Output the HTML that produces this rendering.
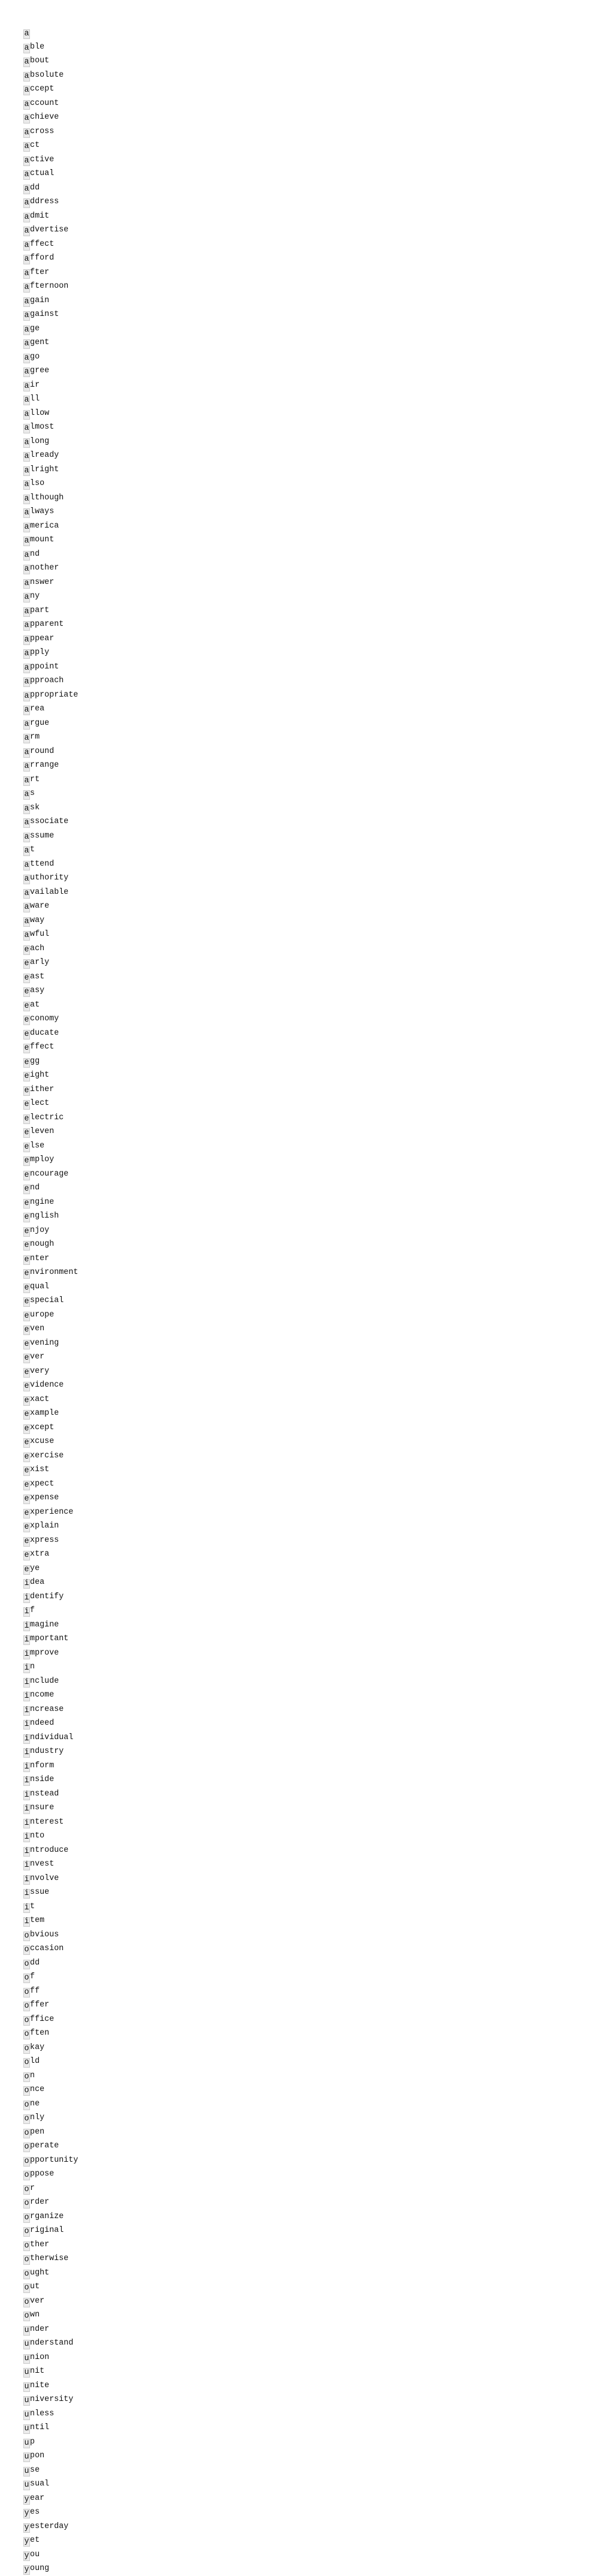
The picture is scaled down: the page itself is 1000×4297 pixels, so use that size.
<!DOCTYPE html>
<html><head><meta charset="utf-8"><style>
html,body{margin:0;background:#fff;}
body{width:1000px;height:4294px;overflow:hidden;}
ul{list-style:none;margin:0;padding:43px 0 0 40px;font-family:"Liberation Mono",monospace;font-size:13.4px;line-height:23.5px;color:#111;}
li{height:23.5px;}
b{font-weight:normal;display:inline-block;background:#ebebeb;border:1px solid #c8c8c8;height:14px;line-height:14px;padding:0 0.5px;margin-left:-1px;vertical-align:-2px;}
</style></head><body><ul id="l"></ul>
<script>
var w="a able about absolute accept account achieve across act active actual add address admit advertise affect afford after afternoon again against age agent ago agree air all allow almost along already alright also although always america amount and another answer any apart apparent appear apply appoint approach appropriate area argue arm around arrange art as ask associate assume at attend authority available aware away awful each early east easy eat economy educate effect egg eight either elect electric eleven else employ encourage end engine english enjoy enough enter environment equal especial europe even evening ever every evidence exact example except excuse exercise exist expect expense experience explain express extra eye idea identify if imagine important improve in include income increase indeed individual industry inform inside instead insure interest into introduce invest involve issue it item obvious occasion odd of off offer office often okay old on once one only open operate opportunity oppose or order organize original other otherwise ought out over own under understand union unit unite university unless until up upon use usual year yes yesterday yet you young".split(" ");
var h="";for(var i=0;i<w.length;i++){h+="<li><b>"+w[i][0]+"</b>"+w[i].slice(1)+"</li>";}
document.getElementById("l").innerHTML=h;
</script></body></html>
